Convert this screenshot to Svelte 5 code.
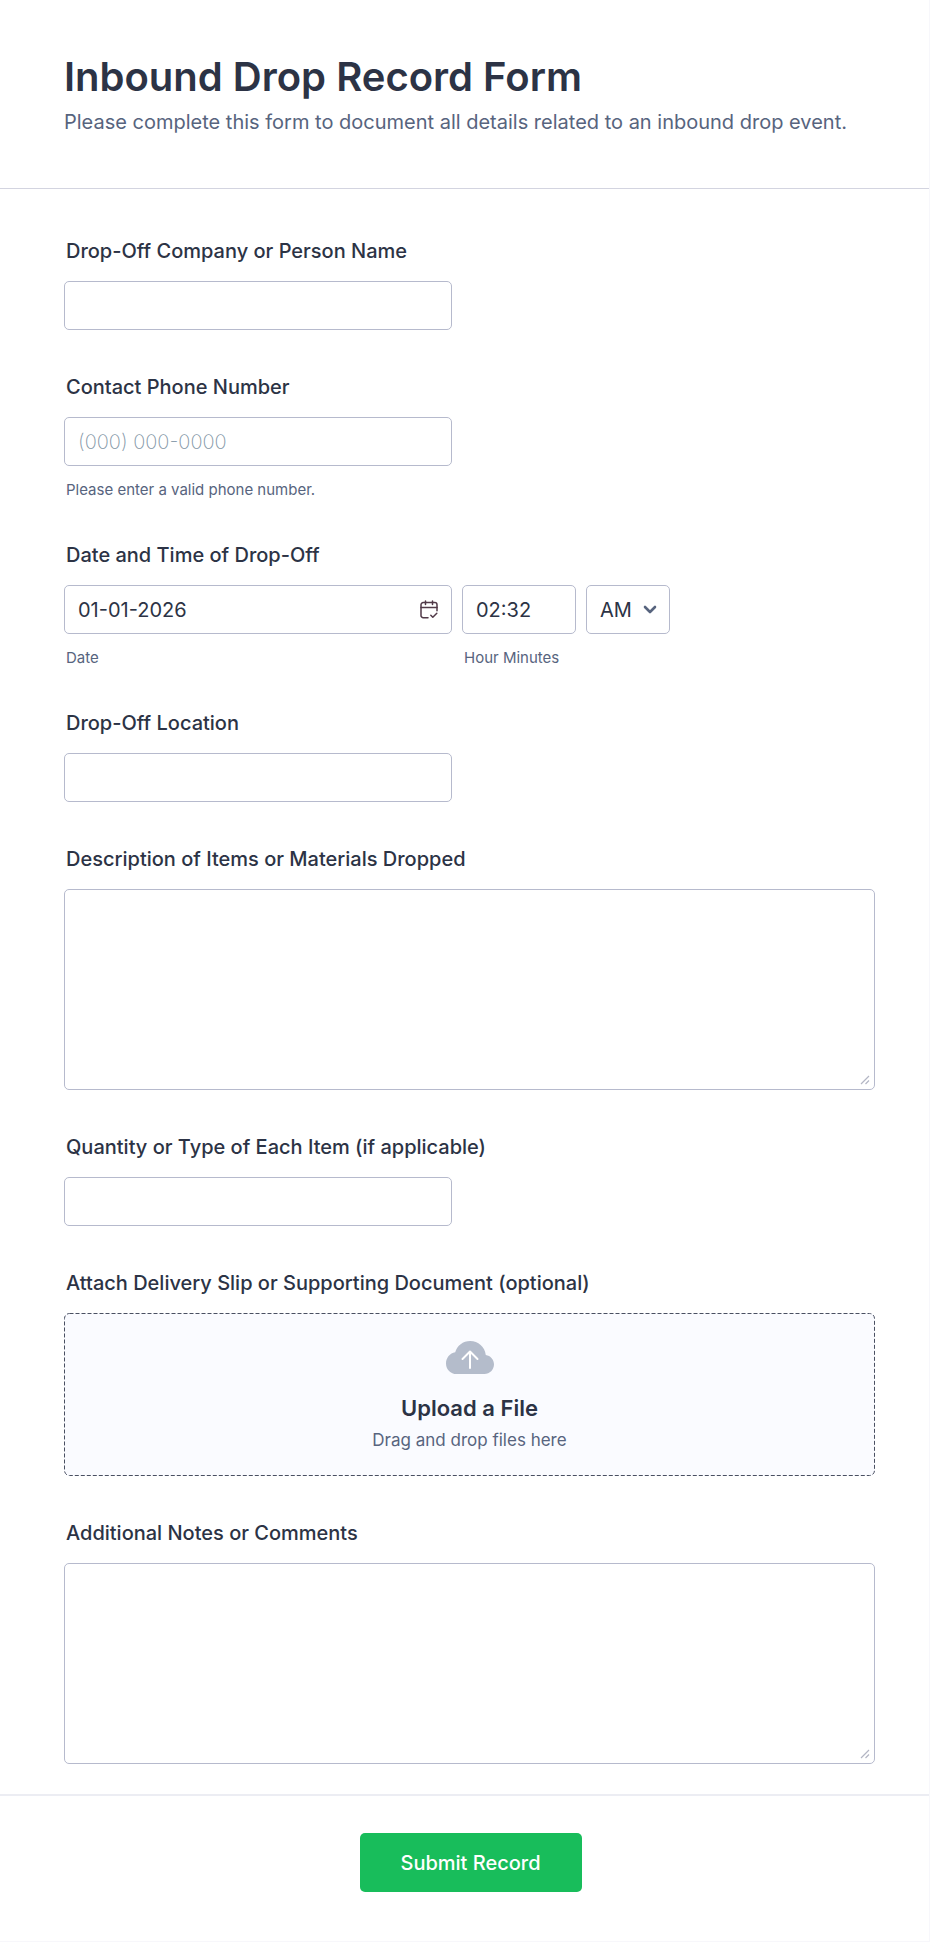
<script>
  let company = $state('');
  let phone = $state('');
  let date = $state('01-01-2026');
  let time = $state('02:32');
  let period = $state('AM');
  let location = $state('');
  let description = $state('');
  let quantity = $state('');
  let notes = $state('');
</script>

<form class="page" onsubmit={(e) => e.preventDefault()}>
  <header class="header">
    <h1>Inbound Drop Record Form</h1>
    <p>Please complete this form to document all details related to an inbound drop event.</p>
  </header>

  <div class="fields">
    <div class="field">
      <label class="label" for="company">Drop-Off Company or Person Name</label>
      <input class="control half" id="company" type="text" bind:value={company} />
    </div>

    <div class="field">
      <label class="label" for="phone">Contact Phone Number</label>
      <input class="control half" id="phone" type="tel" placeholder="(000) 000-0000" bind:value={phone} />
      <span class="hint">Please enter a valid phone number.</span>
    </div>

    <div class="field">
      <label class="label" for="date">Date and Time of Drop-Off</label>
      <div class="datetime">
        <div class="part date">
          <div class="box">
            <input class="control" id="date" type="text" bind:value={date} />
            <button class="calendar" type="button" aria-label="Choose date">
              <svg viewBox="0 0 18 19" width="18" height="19" fill="none" stroke="currentColor" stroke-width="1.5" stroke-linecap="round" stroke-linejoin="round">
                <path d="M8 17.7H3.2a2.2 2.2 0 0 1-2.2-2.2V4.8a2.2 2.2 0 0 1 2.2-2.2h11.6A2.2 2.2 0 0 1 17 4.8v6" />
                <path d="M1 7.500h16M5.500 1v3.400M12.500 1v3.400" />
                <path d="m10.800 15.200 2 2 4-4" />
              </svg>
            </button>
          </div>
          <label class="hint" for="date">Date</label>
        </div>
        <div class="part time">
          <input class="control" id="time" type="text" bind:value={time} />
          <label class="hint" for="time">Hour Minutes</label>
        </div>
        <div class="part period">
          <div class="box">
            <select class="control" aria-label="AM or PM" bind:value={period}>
              <option>AM</option>
              <option>PM</option>
            </select>
            <svg class="chevron" viewBox="0 0 14 9" width="14" height="9" fill="none" stroke="currentColor" stroke-width="2.6" stroke-linecap="round" stroke-linejoin="round">
              <path d="m2 2 5 5 5-5" />
            </svg>
          </div>
        </div>
      </div>
    </div>

    <div class="field">
      <label class="label" for="location">Drop-Off Location</label>
      <input class="control half" id="location" type="text" bind:value={location} />
    </div>

    <div class="field">
      <label class="label" for="description">Description of Items or Materials Dropped</label>
      <textarea class="control area" id="description" bind:value={description}></textarea>
    </div>

    <div class="field">
      <label class="label" for="quantity">Quantity or Type of Each Item (if applicable)</label>
      <input class="control half" id="quantity" type="text" bind:value={quantity} />
    </div>

    <div class="field">
      <label class="label" for="slip">Attach Delivery Slip or Supporting Document (optional)</label>
      <label class="upload">
        <svg class="outline" aria-hidden="true"><rect x="0.5" y="0.5" rx="5" /></svg>
        <input class="file" id="slip" type="file" />
        <svg viewBox="0 0 48 33" width="48" height="33">
          <path fill="#b4bccb" d="M10.5 33C4.700 33 0 28.400 0 22.400C0 16.800 3.900 12.300 9.200 11.300C11 4.700 17 0 24.200 0C32.200 0 38.800 5.900 39.800 13.900C44.500 14.600 48 18.600 48 23.300C48 28.700 43.800 33 38.400 33Z" />
          <path fill="none" stroke="#fff" stroke-width="2" stroke-linecap="round" stroke-linejoin="round" d="M24 27V10.500M16.500 18 24 10.500 31.500 18" />
        </svg>
        <span class="upload-title">Upload a File</span>
        <span class="upload-text">Drag and drop files here</span>
      </label>
    </div>

    <div class="field">
      <label class="label" for="notes">Additional Notes or Comments</label>
      <textarea class="control area" id="notes" bind:value={notes}></textarea>
    </div>
  </div>

  <footer class="footer">
    <button class="submit" type="submit">Submit Record</button>
  </footer>
</form>

<style>
  :global(body) {
    background: #fff;
  }

  .page,
  .page :global(*) {
    box-sizing: border-box;
  }

  .page {
    font-family: Inter, sans-serif;
    color: #2c3345;
    background: #fff;
    border-right: 1px solid #f7f7fb;
    border-bottom: 1px solid #f7f7fb;
  }

  .header {
    padding: 52px 54px 54px 64px;
    border-bottom: 1px solid #d3d4e0;
  }

  h1 {
    margin: 0;
    font-size: 40px;
    line-height: 50px;
    font-weight: 600;
  }

  p {
    margin: 8px 0 0;
    font-size: 20px;
    line-height: 24px;
    color: #57647e;
  }

  .fields {
    display: flex;
    flex-direction: column;
    gap: 45px;
    padding: 50px 54px 30px 64px;
  }

  .field {
    display: flex;
    flex-direction: column;
    align-items: flex-start;
  }

  .label {
    margin: 0 2px 18px;
    font-size: 20px;
    line-height: 24px;
    font-weight: 500;
  }

  .control {
    display: block;
    width: 100%;
    height: 49px;
    margin: 0;
    padding: 0 13px;
    border: 1px solid #b6bacd;
    border-radius: 5px;
    background: #fff;
    color: #2c3345;
    font-family: inherit;
    font-size: 20px;
  }

  .control::placeholder {
    color: #8296a6;
    font-weight: 200;
    opacity: 1;
  }

  .half,
  .date {
    width: 388px;
    max-width: 100%;
  }

  .area {
    height: 201px;
    padding: 12px 13px;
    resize: vertical;
  }

  .area::-webkit-resizer {
    background: url("data:image/svg+xml,%3Csvg xmlns='http://www.w3.org/2000/svg' width='15' height='15' fill='none' stroke='%23b3b6c4' stroke-width='1.2'%3E%3Cpath d='M2 10 10 2M6.5 10 10 6.5'/%3E%3C/svg%3E") no-repeat;
  }

  .hint {
    display: block;
    margin: 16px 2px 0;
    font-size: 15px;
    line-height: 16px;
    color: #57647e;
  }

  .datetime {
    display: flex;
    flex-wrap: wrap;
    gap: 10px;
  }

  .time {
    width: 114px;
  }

  .period {
    width: 84px;
  }

  .box {
    position: relative;
  }

  .calendar {
    position: absolute;
    top: 0;
    right: 0;
    display: flex;
    align-items: center;
    height: 100%;
    padding: 0 14px;
    border: 0;
    background: none;
    color: #513a48;
  }

  select.control {
    appearance: none;
  }

  .chevron {
    position: absolute;
    top: 20px;
    right: 13px;
    color: #57647e;
    pointer-events: none;
  }

  .upload {
    position: relative;
    display: flex;
    flex-direction: column;
    align-items: center;
    width: 100%;
    padding: 28px 13px 25px;
    border-radius: 5px;
    background: #fafbff;
  }

  .outline {
    position: absolute;
    inset: 0;
    width: 100%;
    height: 100%;
  }

  .outline rect {
    width: calc(100% - 1px);
    height: calc(100% - 1px);
    fill: none;
    stroke: #4a5062;
    stroke-dasharray: 4 2;
  }

  .file {
    position: absolute;
    inset: 0;
    opacity: 0;
  }

  .upload-title {
    margin-top: 20px;
    font-size: 22px;
    line-height: 28px;
    font-weight: 600;
  }

  .upload-text {
    margin-top: 7px;
    font-size: 17px;
    line-height: 22px;
    color: #57647e;
  }

  .footer {
    display: flex;
    justify-content: center;
    padding: 37px 52px 49px 64px;
    border-top: 2px solid #ecedf3;
  }

  .submit {
    min-width: 222px;
    height: 59px;
    padding: 0 20px;
    border: 0;
    border-radius: 5px;
    background: #18bd5b;
    color: #fff;
    font-family: inherit;
    font-size: 20px;
    font-weight: 500;
  }
</style>
